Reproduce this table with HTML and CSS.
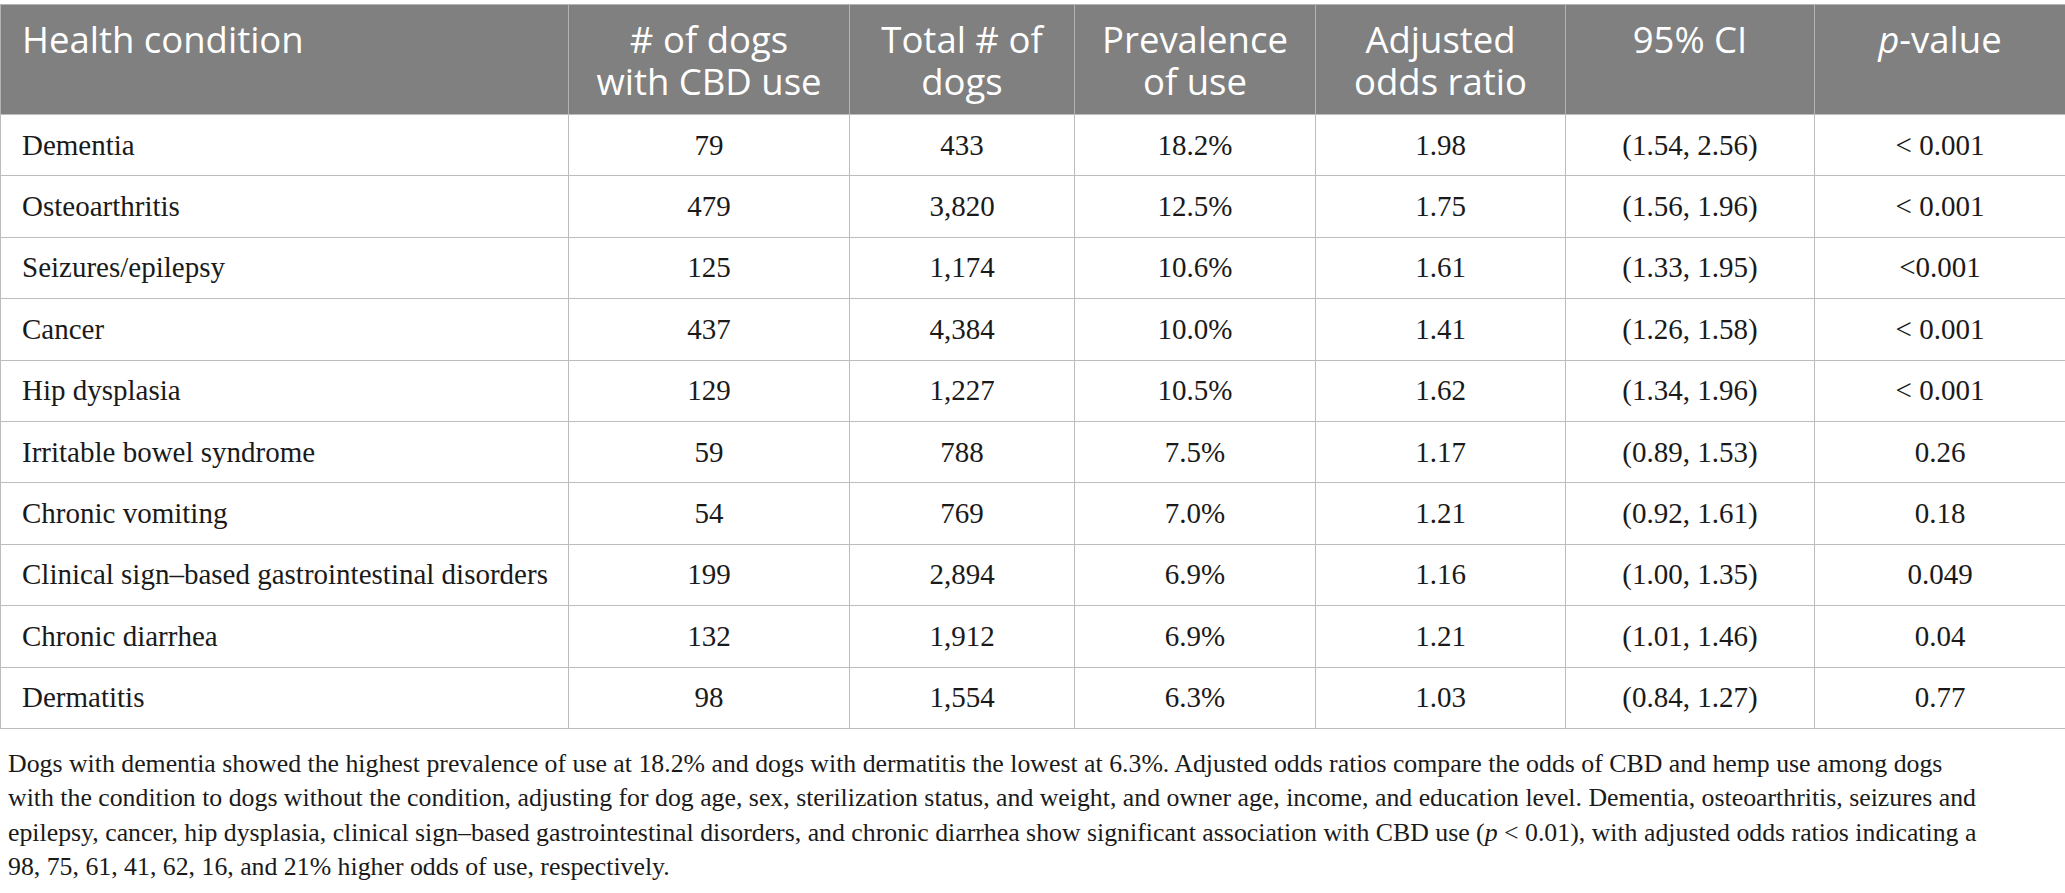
FILE: index.html
```html
<!DOCTYPE html>
<html>
<head>
<meta charset="utf-8">
<link rel="stylesheet" href="styles.css">
</head>
<body>
<table class="data">
  <colgroup>
    <col class="c1"><col class="c2"><col class="c3"><col class="c4"><col class="c5"><col class="c6"><col class="c7">
  </colgroup>
  <thead>
    <tr>
      <th class="first">Health condition</th>
      <th># of dogs<br>with CBD use</th>
      <th>Total # of<br>dogs</th>
      <th>Prevalence<br>of use</th>
      <th>Adjusted<br>odds ratio</th>
      <th>95% CI</th>
      <th><i>p</i>-value</th>
    </tr>
  </thead>
  <tbody>
    <tr><td class="first">Dementia</td><td>79</td><td>433</td><td>18.2%</td><td>1.98</td><td>(1.54, 2.56)</td><td>&lt; 0.001</td></tr>
    <tr><td class="first">Osteoarthritis</td><td>479</td><td>3,820</td><td>12.5%</td><td>1.75</td><td>(1.56, 1.96)</td><td>&lt; 0.001</td></tr>
    <tr><td class="first">Seizures/epilepsy</td><td>125</td><td>1,174</td><td>10.6%</td><td>1.61</td><td>(1.33, 1.95)</td><td>&lt;0.001</td></tr>
    <tr><td class="first">Cancer</td><td>437</td><td>4,384</td><td>10.0%</td><td>1.41</td><td>(1.26, 1.58)</td><td>&lt; 0.001</td></tr>
    <tr><td class="first">Hip dysplasia</td><td>129</td><td>1,227</td><td>10.5%</td><td>1.62</td><td>(1.34, 1.96)</td><td>&lt; 0.001</td></tr>
    <tr><td class="first">Irritable bowel syndrome</td><td>59</td><td>788</td><td>7.5%</td><td>1.17</td><td>(0.89, 1.53)</td><td>0.26</td></tr>
    <tr><td class="first">Chronic vomiting</td><td>54</td><td>769</td><td>7.0%</td><td>1.21</td><td>(0.92, 1.61)</td><td>0.18</td></tr>
    <tr><td class="first">Clinical sign–based gastrointestinal disorders</td><td>199</td><td>2,894</td><td>6.9%</td><td>1.16</td><td>(1.00, 1.35)</td><td>0.049</td></tr>
    <tr><td class="first">Chronic diarrhea</td><td>132</td><td>1,912</td><td>6.9%</td><td>1.21</td><td>(1.01, 1.46)</td><td>0.04</td></tr>
    <tr><td class="first">Dermatitis</td><td>98</td><td>1,554</td><td>6.3%</td><td>1.03</td><td>(0.84, 1.27)</td><td>0.77</td></tr>
  </tbody>
</table>
<p class="note">Dogs with dementia showed the highest prevalence of use at 18.2% and dogs with dermatitis the lowest at 6.3%. Adjusted odds ratios compare the odds of CBD and hemp use among dogs<br>with the condition to dogs without the condition, adjusting for dog age, sex, sterilization status, and weight, and owner age, income, and education level. Dementia, osteoarthritis, seizures and<br>epilepsy, cancer, hip dysplasia, clinical sign–based gastrointestinal disorders, and chronic diarrhea show significant association with CBD use (<i>p</i> &lt; 0.01), with adjusted odds ratios indicating a<br>98, 75, 61, 41, 62, 16, and 21% higher odds of use, respectively.</p>
</body>
</html>
```
FILE: styles.css
```css
html, body {
  margin: 0;
  padding: 0;
  background: #ffffff;
}
body {
  padding-top: 4px;
  width: 2065px;
}
.data {
  width: 2065px;
  border-collapse: collapse;
  table-layout: fixed;
}
.c1 { width: 568px; }
.c2 { width: 281px; }
.c3 { width: 225px; }
.c4 { width: 241px; }
.c5 { width: 250px; }
.c6 { width: 249px; }
.c7 { width: 251px; }

.data th {
  background: #7f807f;
  color: #ffffff;
  font-family: "Open Sans", "Noto Sans", sans-serif;
  font-weight: 400;
  font-size: 36.5px;
  line-height: 42px;
  padding: 13px 8px 12px;
  height: 84px;
  text-align: center;
  vertical-align: top;
  border: 1px solid #b4b4b4;
  border-bottom-color: #bdbdbd;
}
.data th.first {
  text-align: left;
  padding-left: 21px;
}
.data td {
  font-family: "Liberation Serif", "Times New Roman", serif;
  font-size: 29px;
  color: #1a1a1a;
  height: 60.4px;
  padding: 0 10px;
  text-align: center;
  vertical-align: middle;
  border: 1px solid #bcbcbc;
}
.data td.first {
  text-align: left;
  padding-left: 21px;
}
.note {
  margin: 18px 0 0 0;
  padding: 0 8px;
  font-family: "Liberation Serif", "Times New Roman", serif;
  font-size: 25.8px;
  line-height: 34.5px;
  color: #1a1a1a;
  white-space: nowrap;
}
```
